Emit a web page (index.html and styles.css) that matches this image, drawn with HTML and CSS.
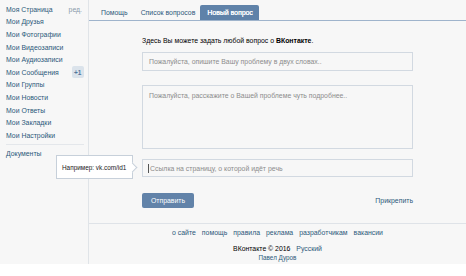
FILE: index.html
```html
<!DOCTYPE html>
<html lang="ru">
<head>
<meta charset="utf-8">
<link rel="stylesheet" href="styles.css">
</head>
<body>
<div class="page">
  <nav class="side">
    <ul class="menu">
      <li><a>Моя Страница</a><span class="edit">ред.</span></li>
      <li><a>Мои Друзья</a></li>
      <li><a>Мои Фотографии</a></li>
      <li><a>Мои Видеозаписи</a></li>
      <li><a>Мои Аудиозаписи</a></li>
      <li><a>Мои Сообщения</a><span class="badge">+1</span></li>
      <li><a>Мои Группы</a></li>
      <li><a>Мои Новости</a></li>
      <li><a>Мои Ответы</a></li>
      <li><a>Мои Закладки</a></li>
      <li><a>Мои Настройки</a></li>
    </ul>
    <div class="sep"></div>
    <ul class="menu">
      <li><a>Документы</a></li>
    </ul>
  </nav>
  <main class="main">
    <div class="tabs">
      <a class="tab">Помощь</a>
      <a class="tab">Список вопросов</a>
      <a class="tab active">Новый вопрос</a>
    </div>
    <div class="form">
      <p class="intro">Здесь Вы можете задать любой вопрос о <b>ВКонтакте</b>.</p>
      <div class="field input">Пожалуйста, опишите Вашу проблему в двух словах..</div>
      <div class="field area">Пожалуйста, расскажите о Вашей проблеме чуть подробнее..</div>
      <div class="linkrow">
        <div class="tip">Например: vk.com/id1</div>
        <div class="field input link"><span class="caret"></span>Ссылка на страницу, о которой идёт речь</div>
      </div>
      <div class="actions">
        <button class="btn">Отправить</button>
        <a class="attach">Прикрепить</a>
      </div>
    </div>
    <footer class="foot">
      <div class="links">
        <a>о сайте</a><a>помощь</a><a>правила</a><a>реклама</a><a>разработчикам</a><a>вакансии</a>
      </div>
      <div class="copy">ВКонтакте © 2016 <a>Русский</a></div>
      <div class="author"><a>Павел Дуров</a></div>
    </footer>
  </main>
</div>
</body>
</html>
```

FILE: styles.css
```css
* { box-sizing: border-box; }
html, body { margin: 0; padding: 0; background: #fff; }
body {
  font-family: "Liberation Sans", Arial, sans-serif;
  font-size: 6.9px;
  color: #000;
}
a { color: #2b587a; text-decoration: none; }
.page {
  display: flex;
  background: #f7f7f7;
  height: 264px;
}
.side {
  width: 88px;
  padding: 3px 4px 0 6px;
}
.menu { list-style: none; margin: 0; padding: 0; }
.menu li {
  display: flex;
  align-items: center;
  justify-content: space-between;
  height: 12.6px;
}
.edit { color: #8a9aab; margin-right: 2px; }
.badge {
  background: #dbe3eb;
  color: #55779b;
  font-weight: bold;
  width: 12.5px;
  height: 12px;
  border-radius: 2px;
  display: flex;
  align-items: center;
  justify-content: center;
  font-size: 6.5px;
}
.sep {
  height: 1px;
  background: #e4e7eb;
  margin: 2.5px 0 2.5px 0;
}
.main {
  flex: 1;
  border-left: 1px solid #e0e4e8;
  display: flex;
  flex-direction: column;
}
.tabs {
  height: 21px;
  border-bottom: 1px solid #9fb4cc;
  display: flex;
  align-items: flex-end;
  padding-left: 6px;
}
.tab {
  height: 15px;
  display: flex;
  align-items: center;
  padding: 0 6px;
  margin-right: 1px;
  border-radius: 2px 2px 0 0;
}
.tab.active {
  background: #5f82a9;
  color: #fff;
  text-shadow: 0.3px 0 0 #fff;
  padding: 0 6px 0 7px;
  margin-left: -2px;
}
.form {
  padding: 15px 53px 0 53px;
  height: 202px;
}
.intro { margin: 0 0 6px 0; height: 10px; line-height: 10px; }
.intro b { font-weight: bold; }
.field {
  border: 1px solid #d2d9e1;
  background: #f7f7f7;
  color: #8c8c8c;
  padding: 0 6px;
}
.input {
  height: 19px;
  display: flex;
  align-items: center;
}
.area {
  height: 64px;
  margin-top: 14px;
  padding-top: 6px;
}
.linkrow {
  position: relative;
  margin-top: 10px;
}
.link { height: 18px; padding-left: 5px; }
.caret {
  display: inline-block;
  width: 1px;
  height: 9px;
  background: #555;
  margin-right: 1px;
}
.tip {
  position: absolute;
  right: calc(100% + 9px);
  top: -4px;
  width: 77px;
  height: 24px;
  white-space: nowrap;
  background: #fff;
  border: 1px solid #c7d0da;
  color: #222;
  display: flex;
  align-items: center;
  padding: 0 0 0 5px;
  font-size: 6.4px;
}
.tip::after {
  content: "";
  position: absolute;
  right: -4px;
  top: 8px;
  width: 6px;
  height: 6px;
  background: #fff;
  border-top: 1px solid #c7d0da;
  border-right: 1px solid #c7d0da;
  transform: rotate(45deg);
}
.actions {
  margin-top: 16px;
  display: flex;
  justify-content: space-between;
  align-items: center;
}
.btn {
  width: 52px;
  height: 15px;
  border: 0;
  border-radius: 2px;
  background: #6283a9;
  color: #fff;
  font-family: inherit;
  font-size: 6.9px;
  padding: 0;
}
.foot {
  border-top: 1px solid #dfe3e8;
  text-align: center;
  padding-top: 5px;
  flex: 1;
}
.links a { margin: 0 3px; }
.copy { margin-top: 9px; color: #000; }
.copy a { margin-left: 4px; }
.author { margin-top: 2px; font-size: 6.3px; }
```
